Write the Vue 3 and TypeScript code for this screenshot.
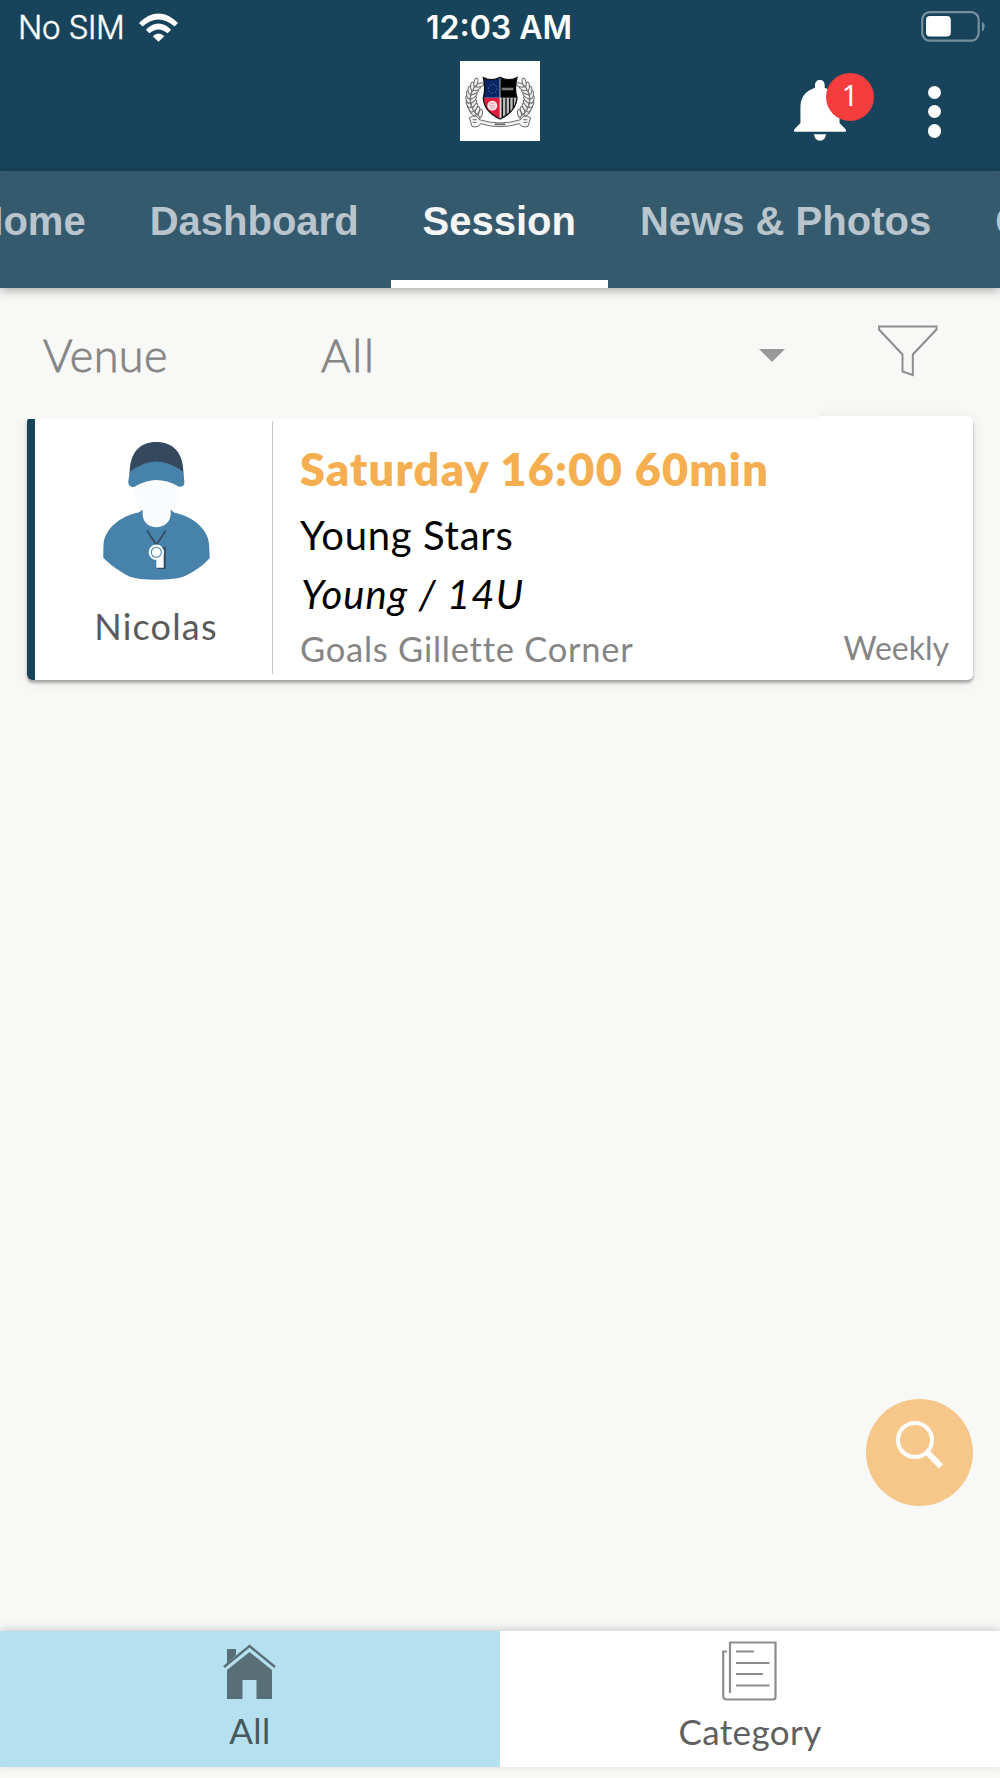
<!-- src/App.vue -->
<template>
  <div class="page">
    <div class="top">
      <div class="status">
        <div class="carrier">
          <span class="sim">No SIM</span>
          <svg class="wifi" viewBox="0 0 120 88">
            <path d="M0 30 L11 41 Q60 -3 109 41 L120 30 Q60 -28 0 30 Z" fill="#fff" />
            <path d="M21 51 L32 62 Q60 38 88 62 L99 51 Q60 13 21 51 Z" fill="#fff" />
            <path d="M42 71 L60 88 L78 71 Q60 54 42 71 Z" fill="#fff" />
          </svg>
        </div>
        <span class="time">12:03 AM</span>
        <svg class="battery" viewBox="0 0 64 31">
          <rect x="1.2" y="1.2" width="56.5" height="28.4" rx="7.5" fill="none" stroke="#76909d" stroke-width="2.2" />
          <rect x="5" y="5" width="24.8" height="20.6" rx="4" fill="#fff" />
          <path d="M61 10.4 Q63.6 12 63.6 15.4 Q63.6 19 61 20.4 Z" fill="#76909d" />
        </svg>
      </div>

      <header class="header">
        <svg class="logo" viewBox="0 0 240 240">
          <rect width="240" height="240" fill="#fff" />
          <g fill="#f4f4f4" stroke="#6a6a6a" stroke-width="3">
            <ellipse
              v-for="(leaf, i) in leaves"
              :key="i"
              rx="12"
              ry="5.5"
              :transform="`translate(${leaf.x} ${leaf.y}) rotate(${leaf.r})`"
            />
            <path d="M28 170 Q48 158 58 176 Q120 196 182 176 Q192 158 212 170 L204 196 Q186 202 178 188 Q120 206 62 188 Q54 202 36 196 Z" />
            <path d="M38 176 h12 M38 184 h12 M190 176 h12 M190 184 h12" />
          </g>
          <path d="M104 190 h32" stroke="#666" stroke-width="5" />
          <g>
            <path d="M70 50 Q94 62 119 50 V110 H70 Q78 80 70 50 Z" fill="#092566" />
            <path d="M121 50 Q148 62 171 50 Q162 80 171 110 H121 Z" fill="#000" />
            <path d="M70 111 H119 V173 Q72 152 70 111 Z" fill="#e11b3c" />
            <path d="M121 111 H171 Q168 152 121 173 Z" fill="#bbb" />
            <path d="M127 112 v56 M138 112 v51 M149 112 v43 M160 112 v31" stroke="#111" stroke-width="4" />
            <circle cx="98" cy="83" r="13" fill="none" stroke="#7f95bd" stroke-width="3" stroke-dasharray="3 7" />
            <circle cx="97" cy="134" r="15" fill="#fbdde2" />
            <path d="M88 134 h18 M91 127 h12 M90 141 h14" stroke="#ee8796" stroke-width="2" />
            <rect x="125" y="80" width="35" height="8" fill="#777" />
            <path d="M70 50 Q94 62 120 49 Q148 62 171 50 Q162 82 171 111 Q168 152 120 174 Q72 152 70 111 Q78 82 70 50 Z" fill="none" stroke="#111" stroke-width="4" />
          </g>
        </svg>
        <div class="actions">
          <div class="bell">
            <svg viewBox="0 0 156 184">
              <path d="M63 14 A14 14 0 0 1 92 14 V23 Q137 38 137 80 V130 L156 149 V156 H0 V149 L19 130 V80 Q19 38 63 23 Z" fill="#fff" />
              <path d="M60 164 H96 Q94 183 78 183 Q62 183 60 164 Z" fill="#fff" />
            </svg>
            <span class="badge">1</span>
          </div>
          <div class="dots"><i></i><i></i><i></i></div>
        </div>
      </header>
    </div>

    <nav class="tabs">
      <div class="track">
        <div v-for="tab in tabs" :key="tab" class="tab" :class="{ active: tab === activeTab }" @click="activeTab = tab">
          {{ tab }}
        </div>
      </div>
    </nav>

    <div class="filter">
      <div class="select">
        <span class="label">Venue</span>
        <span class="value">All</span>
        <i class="arrow"></i>
      </div>
      <svg class="funnel" viewBox="0 0 60 52">
        <path d="M1 1.5 H58.5 V4.5 L34.8 29.5 V50 L24.5 46.5 V29.5 L1 4.5 Z" fill="none" stroke="#8e8e8e" stroke-width="2" />
      </svg>
    </div>

    <main class="list">
      <div v-for="s in sessions" :key="s.title" class="card">
        <div class="coach">
          <svg class="avatar" viewBox="0 0 319 413">
            <path d="M88 125 Q92 178 120 208 Q126 256 160 256 Q194 256 200 208 Q228 178 232 125 Z" fill="#f9fbfd" />
            <path d="M79 95 C79 30 110 0 159 0 S240 30 240 95 Z" fill="#34495e" />
            <path d="M79 90 Q159 26 240 90 L243 120 Q243 137 226 133 Q190 114 159 114 Q128 114 94 134 Q75 137 75 120 Z" fill="#4682aa" />
            <path d="M118 203 V214 C118 240 136 255 159 255 S202 240 202 214 V203 L212 211 C275 225 316 265 317 310 L319 347 C300 370 265 393 235 405 Q210 412 159 412 Q105 412 80 403 C54 391 22 370 0 346 L1 305 C5 260 50 222 106 211 Z" fill="#4682aa" />
            <path d="M131 265 L159 308 L187 265" fill="none" stroke="#34495e" stroke-width="5" />
            <path d="M164 314 H187 V380 H162 Z" fill="#34495e" />
            <circle cx="159" cy="330" r="23" fill="#f9fbfd" />
            <path d="M159 330 L181 322 V376 H159 Z" fill="#f9fbfd" />
            <circle cx="159" cy="330" r="15" fill="#f9fbfd" stroke="#4682aa" stroke-width="3" />
          </svg>
          <span class="name">{{ s.coach }}</span>
        </div>
        <div class="info">
          <div class="when">{{ s.when }}</div>
          <div class="title">{{ s.title }}</div>
          <div class="group">{{ s.group }}</div>
          <div class="foot">
            <span class="venue">{{ s.venue }}</span>
            <span class="repeat">{{ s.repeat }}</span>
          </div>
        </div>
      </div>
    </main>

    <div class="search">
      <svg viewBox="0 0 48 48">
        <circle cx="19" cy="19" r="17" fill="none" stroke="#fff" stroke-width="4" />
        <path d="M30.5 30.5 L45 45.5" stroke="#fff" stroke-width="6" />
      </svg>
    </div>

    <footer class="bottom">
      <div class="item on">
        <svg class="home" viewBox="0 0 53 55">
          <path d="M4 5 H13 V11 L4 20 Z" fill="#596f77" />
          <path d="M1 23 L26.5 2 L52 23" fill="none" stroke="#596f77" stroke-width="2.4" />
          <path d="M26.5 8 L49 26 V55 H33.5 V36 H19.5 V55 H4 V26 Z" fill="#596f77" />
        </svg>
        <span class="all">All</span>
      </div>
      <div class="item">
        <svg class="doc" viewBox="0 0 55 60">
          <g fill="none" stroke="#8c8c8c" stroke-width="2.2">
            <path d="M8 52 V1.5 H53.5 V56 Q53.5 58.5 51 58.5 H5 Q1.2 58.5 1.2 55 V10.5 H5" />
            <path d="M14 10.5 H32 M14 22 H47.5 M14 33 H41 M14 44.5 H47.5" />
          </g>
        </svg>
        <span class="cat">Category</span>
      </div>
    </footer>
  </div>
</template>

<script setup lang="ts">
import { ref } from 'vue'

interface Session {
  coach: string
  when: string
  title: string
  group: string
  venue: string
  repeat: string
}

interface Leaf {
  x: number
  y: number
  r: number
}

const tabs = ['Home', 'Dashboard', 'Session', 'News & Photos', 'Gallery']
const activeTab = ref('Session')

const sessions: Session[] = [
  {
    coach: 'Nicolas',
    when: 'Saturday 16:00 60min',
    title: 'Young Stars',
    group: 'Young / 14U',
    venue: 'Goals Gillette Corner',
    repeat: 'Weekly',
  },
]

// laurel leaves on both sides of the crest
const leaves: Leaf[] = []
for (let i = 0; i < 9; i++) {
  const a = ((137 + i * 10.5) * Math.PI) / 180
  for (const radius of [80, 96]) {
    const x = 120 + radius * Math.cos(a)
    const y = 114 + radius * Math.sin(a) * 0.8
    const r = 245 + i * 8 + (radius === 80 ? 35 : -25)
    leaves.push({ x, y, r })
    leaves.push({ x: 240 - x, y, r: 180 - r })
  }
}
</script>

<style>
body {
  margin: 0;
  background-color: #f8f8f7;
}
</style>

<style scoped>
.page {
  position: relative;
  width: 1000px;
  height: 1778px;
  display: flex;
  flex-direction: column;
  overflow: hidden;
  background-color: #f8f8f7;
  font-family: Lato, sans-serif;
}

.top {
  height: 171px;
  background-color: #18445b;
}

.status {
  height: 54px;
  padding: 0 15px 0 18px;
  display: grid;
  grid-template-columns: 1fr auto 1fr;
  align-items: start;
  color: #fff;
  font-family: Inter, sans-serif;
  font-size: 32px;
  line-height: 56px;
}

.carrier {
  display: flex;
  align-items: flex-start;
}

.sim {
  width: 121px;
  font-weight: 300;
  letter-spacing: -0.6px;
  -webkit-text-stroke: 0.4px #fff;
}

.wifi {
  width: 39px;
  height: 29px;
  margin-top: 13px;
}

.time {
  padding-right: 5px;
  font-weight: 600;
}

.battery {
  width: 64px;
  height: 31px;
  margin-top: 11px;
  justify-self: end;
}

.header {
  display: grid;
  grid-template-columns: 1fr 80px 1fr;
  align-items: start;
}

.logo {
  grid-column: 2;
  width: 80px;
  height: 80px;
  margin-top: 7px;
}

.actions {
  display: flex;
  justify-content: flex-end;
  padding: 26px 59px 0 0;
}

.bell {
  position: relative;
  width: 52px;
  height: 61px;
  margin-right: 81.5px;
}

.bell svg {
  width: 52px;
  height: 61px;
}

.badge {
  position: absolute;
  left: 32px;
  top: -7px;
  width: 48px;
  height: 48px;
  border-radius: 50%;
  background-color: #f53d3d;
  color: #fff;
  font-family: 'Noto Sans', sans-serif;
  font-weight: 400;
  font-size: 29px;
  line-height: 43px;
  text-align: center;
}

.dots {
  display: flex;
  flex-direction: column;
  gap: 6px;
  padding-top: 5.5px;
}

.dots i {
  width: 13.4px;
  height: 13.4px;
  border-radius: 50%;
  background-color: #fff;
}

.tabs {
  position: relative;
  z-index: 3;
  height: 117px;
  background-color: #355a6e;
  box-shadow: 0 2px 10px rgba(0, 0, 0, 0.35);
}

.track {
  display: flex;
  margin-left: -57.5px;
  width: 1057.5px;
  overflow: hidden;
}

.tab {
  flex: none;
  box-sizing: border-box;
  padding: 0 32px;
  height: 117px;
  border-bottom: 8px solid transparent;
  color: #b9c5cc;
  font-family: 'Liberation Sans', sans-serif;
  font-weight: bold;
  font-size: 40px;
  line-height: 100px;
  white-space: nowrap;
  cursor: pointer;
}

.tab.active {
  color: #f5f5f5;
  border-bottom-color: #fff;
}

.filter {
  position: relative;
  z-index: 2;
  height: 128px;
  display: flex;
}

.select {
  box-sizing: border-box;
  width: 820px;
  height: 130.5px;
  padding-left: 43px;
  display: flex;
  align-items: flex-start;
  background-color: #f8f8f7;
  color: #858585;
  font-size: 45px;
  line-height: 134px;
}

.label {
  width: 278px;
  letter-spacing: 0.4px;
  font-weight: 300;
  -webkit-text-stroke: 0.8px #858585;
}

.value {
  width: 438px;
  letter-spacing: 1.8px;
  font-weight: 300;
  -webkit-text-stroke: 0.8px #858585;
}

.arrow {
  margin-top: 61px;
  border-left: 13px solid transparent;
  border-right: 13px solid transparent;
  border-top: 13px solid #999;
}

.funnel {
  width: 60px;
  height: 52px;
  margin: 37px 0 0 58px;
}

.list {
  flex: 1;
  padding: 0 27px;
}

.card {
  box-sizing: border-box;
  height: 264px;
  display: flex;
  background-color: #fff;
  border-left: 8px solid #18445b;
  border-radius: 6px;
  box-shadow: 0 3px 3px rgba(0, 0, 0, 0.3), 0 2px 16px rgba(0, 0, 0, 0.08);
}

.coach {
  box-sizing: border-box;
  width: 238px;
  height: 253px;
  margin-top: 5px;
  padding: 21px 0 0 5px;
  display: flex;
  flex-direction: column;
  align-items: center;
  border-right: 1.5px solid #c8c8c8;
}

.avatar {
  width: 107px;
  height: 138px;
}

.name {
  margin-top: 22px;
  color: #5a5a5a;
  font-size: 36px;
  line-height: 48px;
  letter-spacing: 1.2px;
}

.info {
  flex: 1;
  padding: 23px 24px 0 27px;
}

.when {
  color: #f5ae50;
  font-weight: 800;
  font-size: 45px;
  line-height: 60px;
  letter-spacing: 1.25px;
  margin-bottom: 6px;
}

.title,
.group {
  color: #000;
  font-size: 40px;
  line-height: 60px;
  letter-spacing: 0.7px;
}

.group {
  padding-left: 1px;
  line-height: 59px;
  font-style: italic;
  letter-spacing: 1.1px;
}

.foot {
  display: flex;
  justify-content: space-between;
  align-items: flex-start;
  color: #858585;
  line-height: 50px;
}

.venue {
  font-size: 34.5px;
  letter-spacing: 0.75px;
}

.repeat {
  font-size: 32px;
  margin-top: -1.5px;
}

.search {
  position: absolute;
  left: 866px;
  top: 1399px;
  width: 107px;
  height: 107px;
  border-radius: 50%;
  background-color: #f6c788;
}

.search svg {
  width: 48px;
  height: 48px;
  margin: 22px 0 0 30px;
}

.bottom {
  height: 136px;
  margin-bottom: 11px;
  display: flex;
  box-shadow: 0 -2px 8px rgba(0, 0, 0, 0.17);
}

.item {
  flex: 1;
  display: flex;
  flex-direction: column;
  align-items: center;
  background-color: #fff;
  color: #606060;
  font-size: 35px;
  line-height: 52px;
}

.item.on {
  background-color: #b5e0ef;
  color: #47585e;
}

.home {
  width: 53px;
  height: 55px;
  margin: 12.5px 1px 0 0;
}

.doc {
  width: 55px;
  height: 60px;
  margin: 10px 1px 0 0;
}

.all {
  margin-top: 5.5px;
  letter-spacing: 0.5px;
}

.cat {
  margin-top: 4px;
  letter-spacing: 0.4px;
}
</style>
